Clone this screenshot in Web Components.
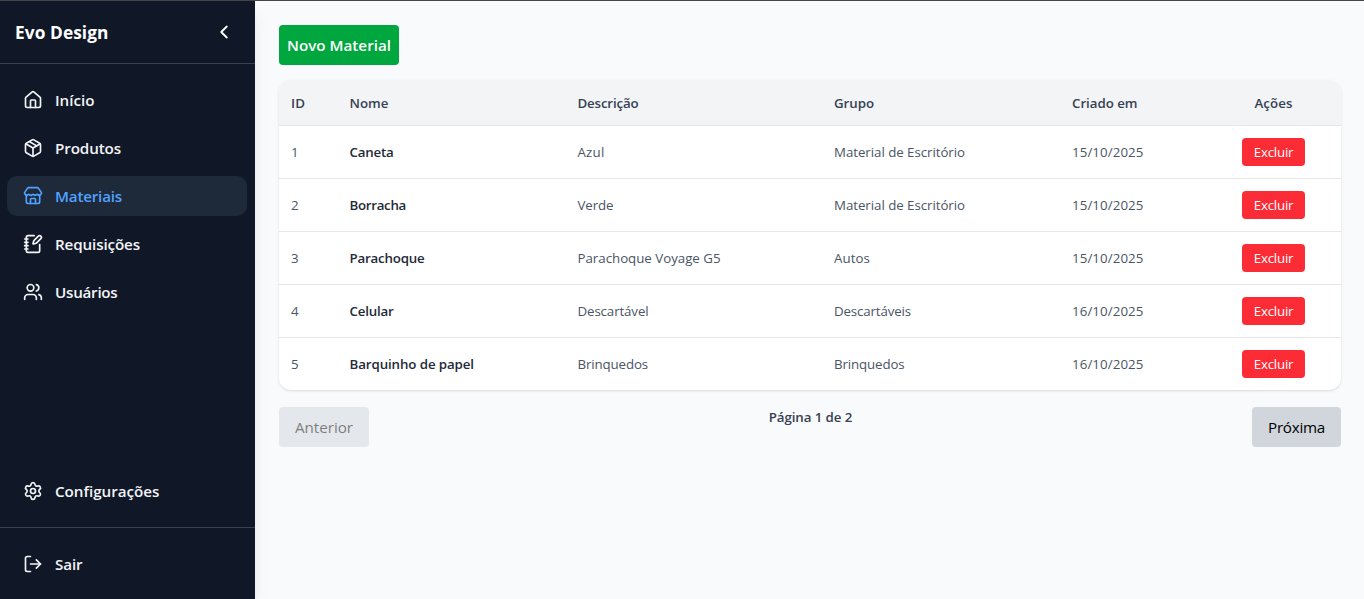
<!DOCTYPE html>
<html lang="pt-BR">
<head>
<meta charset="utf-8">
<title>Evo Design</title>
<style>
html,body{margin:0;height:100%;overflow:hidden}
body{font-family:"Open Sans","Noto Sans",sans-serif;background:#f9fafb}
</style>
</head>
<body>
<evo-app></evo-app>
<script>
const define = (name, html, setup) => {
  const tpl = document.createElement('template');
  customElements.define(name, class extends HTMLElement {
    connectedCallback() {
      if (this.shadowRoot) return;
      tpl.innerHTML = typeof html === 'function' ? html(this) : html;
      this.attachShadow({ mode: 'open' }).append(tpl.content.cloneNode(true));
      if (setup) setup(this);
    }
  });
};

const ICONS = {
  back: '<path d="m15 18-6-6 6-6"/>',
  home: '<path d="M15 21v-8a1 1 0 0 0-1-1h-4a1 1 0 0 0-1 1v8"/><path d="M3 10a2 2 0 0 1 .709-1.528l7-5.999a2 2 0 0 1 2.582 0l7 5.999A2 2 0 0 1 21 10v9a2 2 0 0 1-2 2H5a2 2 0 0 1-2-2z"/>',
  box: '<path d="M11 21.73a2 2 0 0 0 2 0l7-4A2 2 0 0 0 21 16V8a2 2 0 0 0-1-1.73l-7-4a2 2 0 0 0-2 0l-7 4A2 2 0 0 0 3 8v8a2 2 0 0 0 1 1.73z"/><path d="M12 22V12"/><path d="M3.29 7 12 12l8.71-5"/><path d="m7.5 4.27 9 5.15"/>',
  store: '<path d="M15 21v-5a1 1 0 0 0-1-1h-4a1 1 0 0 0-1 1v5"/><path d="M17.774 10.31a1.12 1.12 0 0 0-1.549 0 2.5 2.5 0 0 1-3.451 0 1.12 1.12 0 0 0-1.548 0 2.5 2.5 0 0 1-3.452 0 1.12 1.12 0 0 0-1.549 0 2.5 2.5 0 0 1-3.77-3.248l2.889-4.184A2 2 0 0 1 7 2h10a2 2 0 0 1 1.653.873l2.895 4.192a2.5 2.5 0 0 1-3.774 3.244"/><path d="M4 10.95V19a2 2 0 0 0 2 2h12a2 2 0 0 0 2-2v-8.05"/>',
  note: '<path d="M13.4 2H6a2 2 0 0 0-2 2v16a2 2 0 0 0 2 2h12a2 2 0 0 0 2-2v-7.4"/><path d="M2 6h4M2 10h4M2 14h4M2 18h4"/><path d="M21.378 5.626a1 1 0 1 0-3.004-3.004l-5.01 5.012a2 2 0 0 0-.506.854l-.837 2.87a.5.5 0 0 0 .62.62l2.87-.837a2 2 0 0 0 .854-.506z"/>',
  users: '<path d="M16 21v-2a4 4 0 0 0-4-4H6a4 4 0 0 0-4 4v2"/><path d="M16 3.128a4 4 0 0 1 0 7.744"/><path d="M22 21v-2a4 4 0 0 0-3-3.87"/><circle cx="9" cy="7" r="4"/>',
  gear: '<path d="M9.671 4.136a2.34 2.34 0 0 1 4.659 0 2.34 2.34 0 0 0 3.319 1.915 2.34 2.34 0 0 1 2.33 4.033 2.34 2.34 0 0 0 0 3.831 2.34 2.34 0 0 1-2.33 4.033 2.34 2.34 0 0 0-3.319 1.915 2.34 2.34 0 0 1-4.659 0 2.34 2.34 0 0 0-3.32-1.915 2.34 2.34 0 0 1-2.33-4.033 2.34 2.34 0 0 0 0-3.831A2.34 2.34 0 0 1 6.35 6.051a2.34 2.34 0 0 0 3.319-1.915"/><circle cx="12" cy="12" r="3"/>',
  exit: '<path d="m16 17 5-5-5-5"/><path d="M21 12H9"/><path d="M9 21H5a2 2 0 0 1-2-2V5a2 2 0 0 1 2-2h4"/>'
};

define('evo-icon', el => `<style>:host{display:block;flex:none;line-height:0}</style>
<svg width="${el.getAttribute('size') || 20}" height="${el.getAttribute('size') || 20}" viewBox="0 0 24 24" fill="none" stroke="currentColor" stroke-width="2" stroke-linecap="round" stroke-linejoin="round">${ICONS[el.getAttribute('name')]}</svg>`);

/* One line of text, tracked so that it spans the given measure. */
define('evo-text', '<style>:host{display:inline-block;white-space:nowrap}span{display:inline-block}</style><span><slot></slot></span>', el => {
  const target = parseFloat(el.getAttribute('measure'));
  if (!target) return;
  const span = el.shadowRoot.querySelector('span');
  const natural = span.getBoundingClientRect().width;
  span.style.letterSpacing = (target - natural) / el.textContent.length + 'px';
});

define('evo-nav-item', el => `<style>
:host{display:flex;align-items:center;gap:12px;height:40px;padding:0 16px;box-sizing:border-box;border-radius:10px;color:#f3f4f6;font-size:15.2px;font-weight:600;line-height:24px}
:host([active]){background:#1e2939;color:#51a2ff}
</style><evo-icon name="${el.getAttribute('icon')}"></evo-icon><evo-text measure="${el.getAttribute('measure')}">${el.getAttribute('label')}</evo-text>`);

define('evo-sidebar', `<style>
:host{display:flex;flex-direction:column;box-sizing:border-box;width:255px;height:599px;flex:none;background:#101828;color:#fff;box-shadow:0 10px 15px -3px #0000001a,0 4px 6px -4px #0000001a}
header{display:flex;align-items:center;justify-content:space-between;height:62px;padding:0 20px 0 15px;border-bottom:1px solid #364153;font-size:17.3px;font-weight:700;line-height:28px}
header evo-text{padding-top:2px}
nav{display:flex;flex-direction:column;gap:8px;padding:16px 8px 0 7px;flex:1}
.config{padding:0 8px 16px 7px}
footer{border-top:1px solid #364153;padding:16px 8px 15px 7px}
</style>
<header><evo-text measure="93.5">Evo Design</evo-text><evo-icon name="back" size="22"></evo-icon></header>
<nav>
<evo-nav-item icon="home" label="Início" measure="39.5"></evo-nav-item>
<evo-nav-item icon="box" label="Produtos" measure="66"></evo-nav-item>
<evo-nav-item active icon="store" label="Materiais" measure="67"></evo-nav-item>
<evo-nav-item icon="note" label="Requisições" measure="85"></evo-nav-item>
<evo-nav-item icon="users" label="Usuários" measure="62.5"></evo-nav-item>
</nav>
<div class="config"><evo-nav-item icon="gear" label="Configurações" measure="104.5"></evo-nav-item></div>
<footer><evo-nav-item icon="exit" label="Sair" measure="27.5"></evo-nav-item></footer>`);

define('evo-button', `<style>
:host{display:flex;align-items:center;justify-content:center;box-sizing:border-box;border-radius:4px;width:90px;height:40px;font-size:15.2px;line-height:24px;background:#d1d5dc;color:#000}
:host([kind=primary]){width:120px;background:#00a63e;color:#fff;font-weight:600}
:host([kind=danger]){display:inline-flex;vertical-align:top;width:63px;height:28px;background:#fb2c36;color:#fff;font-size:13.3px;line-height:20px}
:host([kind=next]){width:89px}
:host([disabled]){opacity:.5}
</style><slot></slot>`);

define('evo-table', () => {
  const rows = [
    ['1', 'Caneta', 44, 'Azul', 27, 'Material de Escritório', 131, '15/10/2025'],
    ['2', 'Borracha', 56.5, 'Verde', 36, 'Material de Escritório', 131, '15/10/2025'],
    ['3', 'Parachoque', 75, 'Parachoque Voyage G5', 143, 'Autos', 36, '15/10/2025'],
    ['4', 'Celular', 44, 'Descartável', 71, 'Descartáveis', 77, '16/10/2025'],
    ['5', 'Barquinho de papel', 124.5, 'Brinquedos', 70.5, 'Brinquedos', 70.5, '16/10/2025']
  ];
  const t = (s, w) => `<evo-text measure="${w}">${s}</evo-text>`;
  return `<style>
:host{display:block;width:1062px;height:310px;border-radius:12px;overflow:hidden;background:#fff;box-shadow:0 1px 3px #0000001a,0 1px 2px -1px #0000001a;font-size:13.3px;line-height:20px;color:#4a5565}
.row{display:grid;grid-template-columns:58.5px 228px 256.5px 238px 146px 135px;align-items:center;height:53px;box-sizing:border-box;border-bottom:1px solid #e5e7eb}
.row:last-child{border-bottom-color:transparent}
.row>div{padding:0 12px}
.row>div:last-child{text-align:center}
.head{height:46px;padding-bottom:1px;background:#f3f4f6;color:#364153;font-weight:600}
.head>div{padding-top:1px}
.name{font-weight:600;color:#1e2939}
</style>
<div class="row head"><div>${t('ID', 14)}</div><div>${t('Nome', 39)}</div><div>${t('Descrição', 61)}</div><div>${t('Grupo', 40)}</div><div>${t('Criado em', 65.5)}</div><div>${t('Ações', 38)}</div></div>` +
  rows.map(r => `<div class="row"><div>${t(r[0], 7.5)}</div><div class="name">${t(r[1], r[2])}</div><div>${t(r[3], r[4])}</div><div>${t(r[5], r[6])}</div><div>${t(r[7], 71.5)}</div><div><evo-button kind="danger">${t('Excluir', 39.5)}</evo-button></div></div>`).join('');
});

define('evo-pager', `<style>
:host{display:flex;justify-content:space-between;align-items:flex-start;margin-top:17px}
.page{font-size:13.3px;line-height:20px;font-weight:600;color:#364153}
</style>
<evo-button disabled><evo-text measure="58">Anterior</evo-text></evo-button>
<div class="page"><evo-text measure="83.5">Página 1 de 2</evo-text></div>
<evo-button kind="next"><evo-text measure="57">Próxima</evo-text></evo-button>`);

define('evo-app', `<style>
:host{display:flex;flex-direction:column;box-sizing:border-box;width:1364px;height:599px;overflow:hidden;border-top:1px solid #444448;background:#f9fafb}
.body{display:flex;flex:1;min-height:0}
main{flex:1;padding:24px 23px 0 24px}
evo-table{margin-top:15px}
evo-sidebar{height:598px}
</style>
<div class="body"><evo-sidebar></evo-sidebar>
<main><evo-button kind="primary"><evo-text measure="104">Novo Material</evo-text></evo-button><evo-table></evo-table><evo-pager></evo-pager></main></div>`);
</script>
</body>
</html>
